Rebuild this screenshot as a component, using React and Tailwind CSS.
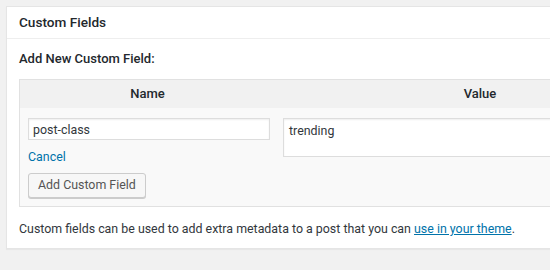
import React from "react"

const App = () => {
  return (
    <div className="h-[270px] w-[550px] overflow-hidden bg-[#f1f1f1] pt-[6px] pl-[6px] font-['Roboto','Liberation_Sans',Arial,sans-serif] text-[12.4px] text-[#23282d]">
      <div className="w-[700px] border border-[#e5e5e5] bg-white shadow-[0_1px_1px_rgba(0,0,0,0.04)]">
        <div className="flex h-[32px] items-center border-b border-[#eeeeee] px-3">
          <h2 className="text-[13.6px] font-medium">Custom Fields</h2>
        </div>
        <div className="px-3 pt-[10px] pb-[9px]">
          <p className="text-[13px] font-medium leading-[20px]">Add New Custom Field:</p>
          <div className="mt-[10px] border border-[#e1e1e1] bg-[#f9f9f9]">
            <div className="flex h-[28px] items-center bg-[#f1f1f1] text-[13px] font-medium">
              <div className="w-[255px] text-center">Name</div>
              <div className="w-[410px] text-center">Value</div>
            </div>
            <div className="flex gap-[13px] px-2 pt-[10px] pb-[8px]">
              <div className="w-[242px]">
                <input
                  readOnly
                  value="post-class"
                  className="h-[22px] w-full border border-[#dddddd] bg-white px-[4px] font-['Roboto','Liberation_Sans',Arial,sans-serif] text-[12.4px] text-[#32373c] shadow-[inset_0_1px_2px_rgba(0,0,0,0.07)] outline-none"
                />
                <a className="mt-[7px] block leading-[20px] text-[#0073aa]">Cancel</a>
                <button className="mt-[6px] h-[25px] rounded-[3px] border border-[#cccccc] bg-[#f7f7f7] px-[9px] font-['Roboto','Liberation_Sans',Arial,sans-serif] text-[12.4px] text-[#555555] shadow-[0_1px_0_#cccccc]">
                  Add Custom Field
                </button>
              </div>
              <textarea
                readOnly
                value="trending"
                className="h-[39px] w-[400px] resize-none border border-[#dddddd] bg-white px-[5px] py-[2px] font-['Roboto','Liberation_Sans',Arial,sans-serif] text-[12.4px] leading-[20px] text-[#32373c] shadow-[inset_0_1px_2px_rgba(0,0,0,0.07)] outline-none"
              />
            </div>
          </div>
          <p className="mt-[12px] leading-[20px] text-[#32373c]">
            Custom fields can be used to add extra metadata to a post that you can{" "}
            <a className="text-[#0073aa] underline">use in your theme</a>.
          </p>
        </div>
      </div>
    </div>
  )
}

export default App
